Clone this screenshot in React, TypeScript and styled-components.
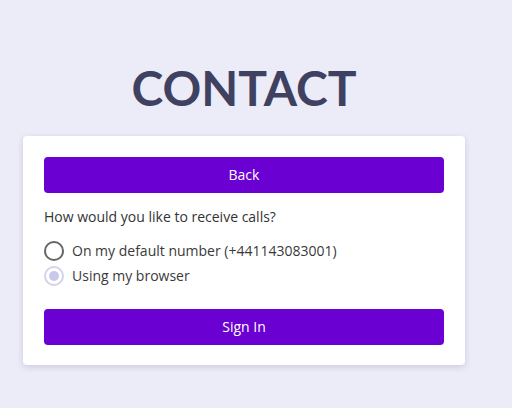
import styled, { createGlobalStyle } from 'styled-components';

const GlobalStyle = createGlobalStyle`
  html, body {
    margin: 0;
    padding: 0;
    background: #ecebf8;
  }
  body {
    font-family: 'Open Sans', 'Liberation Sans', sans-serif;
  }
`;

const Page = styled.div`
  width: 512px;
  height: 408px;
  padding: 60px 0 0 23px;
  box-sizing: border-box;
`;

const Column = styled.div`
  width: 442px;
  display: flex;
  flex-direction: column;
  align-items: center;
`;

const Title = styled.h1`
  margin: 0 0 20px;
  font-family: Lato, 'Open Sans', sans-serif;
  font-weight: 700;
  font-size: 48px;
  line-height: 56px;
  color: #3e4160;
`;

const Card = styled.div`
  width: 100%;
  box-sizing: border-box;
  background: #fff;
  border-radius: 4px;
  padding: 21px 21px 20px;
  box-shadow: 0 2px 6px rgba(60, 60, 120, 0.18);
`;

const Button = styled.button`
  display: block;
  width: 400px;
  height: 36px;
  padding: 0 0 1px;
  border: none;
  border-radius: 4px;
  background: #6a00d1;
  color: #fff;
  font-family: 'Open Sans', sans-serif;
  font-size: 14px;
  cursor: pointer;
`;

const Question = styled.p`
  margin: 14px 0 11px;
  font-size: 14px;
  line-height: 20px;
  color: #333;
`;

const Options = styled.div`
  display: flex;
  flex-direction: column;
  margin-bottom: 21px;
`;

const Option = styled.label`
  display: flex;
  align-items: center;
  gap: 8px;
  height: 25px;
  font-size: 14px;
  color: #3a3a3a;
`;

const Radio = styled.span<{ checked?: boolean; disabled?: boolean }>`
  width: 20px;
  height: 20px;
  box-sizing: border-box;
  border-radius: 50%;
  border: 2px solid ${({ disabled }) => (disabled ? '#d3d3ee' : '#666')};
  display: flex;
  align-items: center;
  justify-content: center;

  &::after {
    content: '';
    display: ${({ checked }) => (checked ? 'block' : 'none')};
    width: 10px;
    height: 10px;
    border-radius: 50%;
    background: #c8c8ea;
  }
`;

export default function App() {
  return (
    <Page>
      <GlobalStyle />
      <Column>
        <Title>CONTACT</Title>
        <Card>
          <Button>Back</Button>
          <Question>How would you like to receive calls?</Question>
          <Options>
            <Option>
              <Radio />
              On my default number (+441143083001)
            </Option>
            <Option>
              <Radio checked disabled />
              Using my browser
            </Option>
          </Options>
          <Button>Sign In</Button>
        </Card>
      </Column>
    </Page>
  );
}
